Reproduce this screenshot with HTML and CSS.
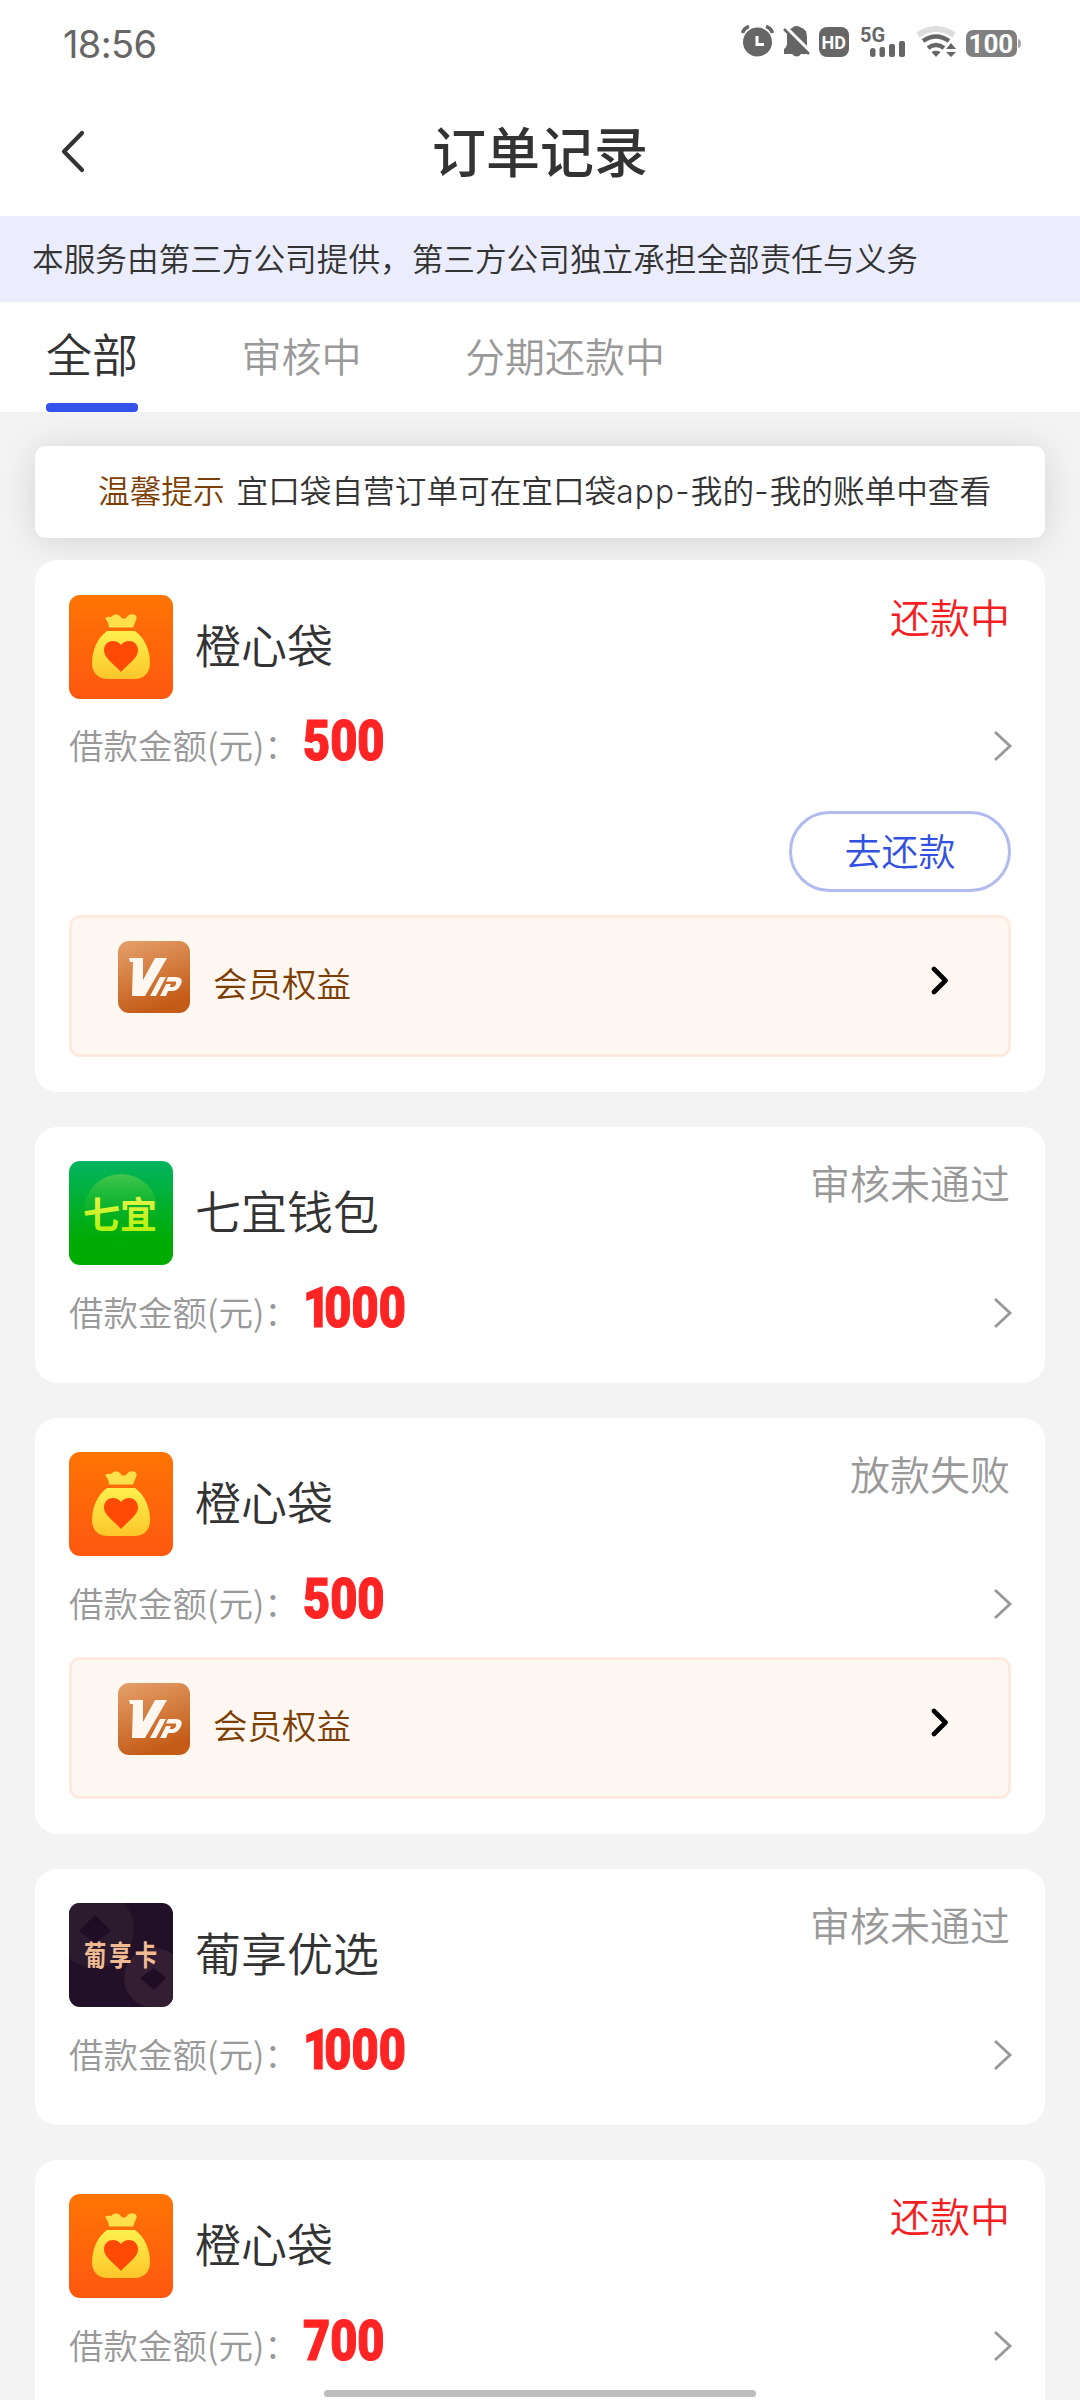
FILE: index.html
```html
<!DOCTYPE html>
<html lang="zh-CN">
<head>
<meta charset="utf-8">
<title>订单记录</title>
<link rel="stylesheet" href="styles.css">
</head>
<body>
<svg class="defs" width="0" height="0" aria-hidden="true">
  <defs>
    <linearGradient id="orange" x1="0" y1="0" x2="0" y2="1"><stop offset="0" stop-color="#ff7404"/><stop offset="1" stop-color="#fe5810"/></linearGradient>
    <linearGradient id="gold" x1="0" y1="0" x2="0" y2="1"><stop offset="0" stop-color="#fff04e"/><stop offset="1" stop-color="#fdc62a"/></linearGradient>
    <linearGradient id="green" x1="0" y1="0" x2="0" y2="1"><stop offset="0" stop-color="#02b560"/><stop offset=".75" stop-color="#00ab04"/><stop offset="1" stop-color="#00aa00"/></linearGradient>
    <linearGradient id="glow" x1="0" y1="0" x2="0" y2="1"><stop offset="0" stop-color="#5fcf4c" stop-opacity=".7"/><stop offset=".6" stop-color="#20b820" stop-opacity=".1"/><stop offset="1" stop-color="#10b010" stop-opacity=".05"/></linearGradient>
    <linearGradient id="lime" x1="0" y1="0" x2="0" y2="1"><stop offset="0" stop-color="#f4f55a"/><stop offset="1" stop-color="#a8f000"/></linearGradient>
    <linearGradient id="bronze" x1="0" y1="0" x2=".35" y2="1"><stop offset="0" stop-color="#e5a16b"/><stop offset="1" stop-color="#c45c18"/></linearGradient>
    <symbol id="bag" viewBox="0 0 104 104">
      <rect width="104" height="104" rx="11" fill="url(#orange)"/>
      <path d="M40 32.500Q40 28 36 23Q39 21 42 22Q46 17 51 21Q53 25 57 23Q60 18 65 19.500Q69 21 67 25L64 32.500Z" fill="#ffe04a"/>
      <path d="M38 36H66C76 43 81 56 81 68C81 78 75 84 65 84H39C29 84 23 78 23 68C23 56 28 43 38 36Z" fill="url(#gold)"/>
      <path d="M52 77C44 68 35 63 35 55.500C35 45 47 43 52 50C57 43 69 45 69 55.500C69 63 60 68 52 77Z" fill="#ff4a05"/>
    </symbol>
    <symbol id="qiyi" viewBox="0 0 104 104">
      <rect width="104" height="104" rx="11" fill="url(#green)"/>
      <circle cx="52" cy="50" r="37" fill="url(#glow)"/>
      <text class="qiyi-text" x="14" y="68" fill="url(#lime)">七宜</text>
    </symbol>
    <symbol id="puxiang" viewBox="0 0 104 104">
      <clipPath id="tile"><rect width="104" height="104" rx="11"/></clipPath>
      <g clip-path="url(#tile)">
        <rect width="104" height="104" fill="#211027"/>
        <circle cx="26" cy="26" r="39" fill="#2c1a2f"/>
        <path d="M10 28L26 12L42 28L26 40Z" fill="#1e0d25"/>
        <circle cx="85" cy="75" r="30" fill="#341e33"/>
        <path d="M71 75L85 65L97 75L85 87Z" fill="#1e0d25"/>
        <text class="puxiang-text" transform="translate(15 63) scale(.86 1.1)">葡享卡</text>
      </g>
    </symbol>
    <symbol id="vip" viewBox="0 0 72 72">
      <rect width="72" height="72" rx="11" fill="url(#bronze)"/>
      <path d="M11 17H25L25 39L37 17H49L27 55H14L15 21H12Z" fill="#fff7f0"/>
      <path d="M42 36H48L38 55H32Z" fill="#fff7f0"/>
      <path d="M50 36H58Q65 36 63.500 42Q61 49 55 50H50L48 55H42L48 43H53L51.500 46H55Q59 44 58 40.500H48Z" fill="#fff7f0"/>
    </symbol>
    <symbol id="next" viewBox="0 0 20 34"><path d="M2 3L17 17L2 31" fill="none" stroke="#999" stroke-width="2.900"/></symbol>
    <symbol id="go" viewBox="0 0 18 30"><path d="M3 3L14.500 14.500L3 26" fill="none" stroke="#000" stroke-width="4.600" stroke-linecap="round" stroke-linejoin="round"/></symbol>
  </defs>
</svg>

<header class="status-bar">
  <span class="clock">18:56</span>
  <svg class="status-icons" viewBox="0 0 290 40" fill="#666">
    <circle cx="17.500" cy="22" r="14.500"/>
    <path d="M2.500 13Q4 8 9 6.500M32.500 13Q31 8 26 6.500" fill="none" stroke="#666" stroke-width="3.500"/>
    <path d="M17 16V24.500H24" fill="none" stroke="#fff" stroke-width="3"/>
    <path d="M47 12L69 34H44V29Q47 27 47 23ZM50 9Q53 8 53 7Q56 5 60 7Q67 9 67 17V26Z"/>
    <path d="M51 33H62Q57 40 51 33Z"/>
    <path d="M44 9L69 34" fill="none" stroke="#666" stroke-width="2.500"/>
    <rect x="79" y="7" width="30" height="30" rx="8"/>
    <text x="81.500" y="29" class="hd">HD</text>
    <text x="120" y="21.500" class="five-g">5G</text>
    <rect x="130" y="28" width="5.500" height="9" rx="2.500"/><rect x="139.500" y="27" width="5.500" height="10" rx="2"/><rect x="149" y="24" width="6" height="13" rx="2"/><rect x="159" y="21" width="6" height="16" rx="2"/>
    <path d="M178 15Q196 3 214 15" fill="none" stroke="#ddd" stroke-width="6"/>
    <path d="M183 21Q196 12 209 21M188 28Q196 22 204 28" fill="none" stroke="#666" stroke-width="4.500"/>
    <path d="M191.500 32Q196 29.500 200.500 32L196 37Z"/>
    <path d="M206 29L211 23L216 29ZM206 32H216L211 37Z"/>
    <rect x="226" y="10" width="51" height="27" rx="7" fill="#808080"/>
    <path d="M278 19Q281 19 281 23.500Q281 28 278 28Z" fill="#aaa"/>
    <text x="228.500" y="33" class="battery">100</text>
  </svg>
</header>

<nav class="title-bar">
  <svg class="back" viewBox="0 0 26 44"><path d="M22 3L4 21.500L22 40" fill="none" stroke="#333" stroke-width="4.200" stroke-linecap="round" stroke-linejoin="round"/></svg>
  <h1 class="title">订单记录</h1>
</nav>
<div class="notice">本服务由第三方公司提供，第三方公司独立承担全部责任与义务</div>
<div class="tabs">
  <span class="tab tab-active">全部</span>
  <span class="tab">审核中</span>
  <span class="tab">分期还款中</span>
</div>

<main class="list">
  <div class="tip"><span class="tip-label">温馨提示</span><span>宜口袋自营订单可在宜口袋<span class="latin">app-</span>我的<span class="latin">-</span>我的账单中查看</span></div>

  <section class="card card-paying">
    <div class="head"><svg class="logo"><use href="#bag"/></svg><h2 class="name">橙心袋</h2><span class="state state-due">还款中</span></div>
    <div class="loan"><span class="label">借款金额(元)：</span><span class="amount">500</span><svg class="next"><use href="#next"/></svg></div>
    <div class="actions"><button class="repay">去还款</button></div>
    <div class="vip"><svg class="vip-icon"><use href="#vip"/></svg><span class="vip-text">会员权益</span><svg class="go"><use href="#go"/></svg></div>
  </section>

  <section class="card card-plain">
    <div class="head"><svg class="logo"><use href="#qiyi"/></svg><h2 class="name">七宜钱包</h2><span class="state">审核未通过</span></div>
    <div class="loan"><span class="label">借款金额(元)：</span><span class="amount"><span class="one">1</span>000</span><svg class="next"><use href="#next"/></svg></div>
  </section>

  <section class="card card-member">
    <div class="head"><svg class="logo"><use href="#bag"/></svg><h2 class="name">橙心袋</h2><span class="state">放款失败</span></div>
    <div class="loan"><span class="label">借款金额(元)：</span><span class="amount">500</span><svg class="next"><use href="#next"/></svg></div>
    <div class="vip"><svg class="vip-icon"><use href="#vip"/></svg><span class="vip-text">会员权益</span><svg class="go"><use href="#go"/></svg></div>
  </section>

  <section class="card card-plain">
    <div class="head"><svg class="logo"><use href="#puxiang"/></svg><h2 class="name">葡享优选</h2><span class="state">审核未通过</span></div>
    <div class="loan"><span class="label">借款金额(元)：</span><span class="amount"><span class="one">1</span>000</span><svg class="next"><use href="#next"/></svg></div>
  </section>

  <section class="card card-last">
    <div class="head"><svg class="logo"><use href="#bag"/></svg><h2 class="name">橙心袋</h2><span class="state state-due">还款中</span></div>
    <div class="loan"><span class="label">借款金额(元)：</span><span class="amount">700</span><svg class="next"><use href="#next"/></svg></div>
  </section>
</main>
<div class="home-indicator"></div>
</body>
</html>
```
FILE: styles.css
```css
* { box-sizing: border-box; }
body {
  margin: 0;
  width: 1080px;
  height: 2400px;
  overflow: hidden;
  display: flex;
  flex-direction: column;
  background: #f3f3f3;
  color: #333;
  font-family: "Noto Sans CJK SC", sans-serif;
  font-weight: 350;
}
.defs { position: absolute; }
svg { display: block; flex: none; }

.status-bar {
  flex: none;
  height: 88px;
  padding: 0 50px 0 63px;
  display: flex;
  justify-content: space-between;
  background: #fff;
}
.clock { font: 400 38px/88px Inter, sans-serif; color: #666; letter-spacing: -0.6px; }
.status-icons { width: 290px; height: 40px; margin-top: 20px; }
.hd { font: 700 18px Roboto, sans-serif; fill: #fff; }
.five-g { font: 700 20px Roboto, sans-serif; }
.battery { font: 700 26px Roboto, sans-serif; fill: #fff; }

.title-bar {
  flex: none;
  height: 128px;
  padding: 0 60px;
  display: grid;
  grid-template-columns: 60px 1fr 60px;
  align-items: center;
  background: #fff;
}
.back { width: 26px; height: 44px; }
.title { margin: 0; font-size: 54px; line-height: 124px; height: 128px; font-weight: 500; text-align: center; }

.notice { flex: none; height: 86px; padding-left: 32px; background: #ebedfc; font-size: 31.65px; line-height: 82px; white-space: nowrap; }

.tabs { flex: none; height: 110px; padding-left: 46px; display: flex; gap: 103.5px; background: #fff; }
.tab { font-size: 40px; line-height: 106px; color: #999; }
.tab-active { position: relative; font-size: 46px; line-height: 101px; color: #333; }
.tab-active::after {
  content: "";
  position: absolute;
  left: 0;
  right: 0;
  bottom: 0;
  height: 9px;
  border-radius: 4px;
  background: #3352ea;
}

.list { flex: 1; min-height: 0; padding: 34px 35px 0; display: flex; flex-direction: column; overflow: hidden; }
.tip {
  flex: none;
  height: 92px;
  margin-bottom: 22px;
  padding-left: 63px;
  display: flex;
  gap: 12px;
  border-radius: 11px;
  background: #fff;
  box-shadow: 0 3px 34px rgba(0, 0, 0, .13);
  font-size: 31.65px;
  line-height: 87px;
  white-space: nowrap;
}
.tip-label { color: #7d3e04; }
.latin { font-family: Inter, sans-serif; letter-spacing: 1.2px; }

.card { position: relative; flex: none; margin-bottom: 34.5px; padding: 34.5px 34px 0; border-radius: 22px; background: #fff; }
.card-paying { height: 532px; }
.card-plain { height: 256.5px; }
.card-member { height: 416.5px; }
.card-last { flex: 1; margin-bottom: 0; border-radius: 22px 22px 0 0; }

.head { display: flex; height: 104px; }
.logo { width: 104px; height: 104px; }
.qiyi-text { font: 700 37px "Noto Sans CJK SC", sans-serif; }
.puxiang-text { font: 700 26px "Noto Sans CJK SC", sans-serif; letter-spacing: 3.500px; fill: #efbb93; }
.name { margin: 0 0 0 22px; font-size: 46px; line-height: 97px; font-weight: 350; }
.state { margin-left: auto; padding-right: 1px; font-size: 40px; line-height: 43px; color: #999; }
.state-due { color: #f3201f; }

.loan { height: 94px; display: flex; align-items: center; }
.label { width: 233.500px; padding-bottom: 3px; font-size: 34.5px; color: #999; white-space: nowrap; }
.amount {
  margin-bottom: 7px;
  font: 900 55.5px/1 Roboto, sans-serif;
  color: #ff2424;
  -webkit-text-stroke: 1.2px #ff2424;
  transform: scaleX(.845);
  transform-origin: left;
}
.one { letter-spacing: -7px; }
.next { width: 20px; height: 34px; margin: 1px -2px 0 auto; }

.actions { height: 106px; padding-top: 18.5px; display: flex; justify-content: flex-end; }
.repay {
  width: 222px;
  height: 81px;
  padding: 0 0 4px;
  border: 3px solid #b1bbef;
  border-radius: 41px;
  background: #fff;
  color: #3351e0;
  font: 350 37px/70px "Noto Sans CJK SC", sans-serif;
}
.vip {
  height: 142px;
  margin-top: 7px;
  padding: 23px 60px 0 46px;
  display: flex;
  border: 3px solid #ffeae0;
  border-radius: 11px;
  background: #fff8f2;
}
.card-paying .vip { margin-top: 16.5px; }
.vip-icon { width: 72px; height: 72px; }
.vip-text { margin-left: 23px; color: #7d3e04; font-size: 34.5px; line-height: 83px; }
.go { width: 18px; height: 30px; margin: 25px -1px 0 auto; }

.home-indicator { position: fixed; left: 324px; top: 2390px; width: 432px; height: 7px; border-radius: 4px; background: #bdbdbd; }
```
